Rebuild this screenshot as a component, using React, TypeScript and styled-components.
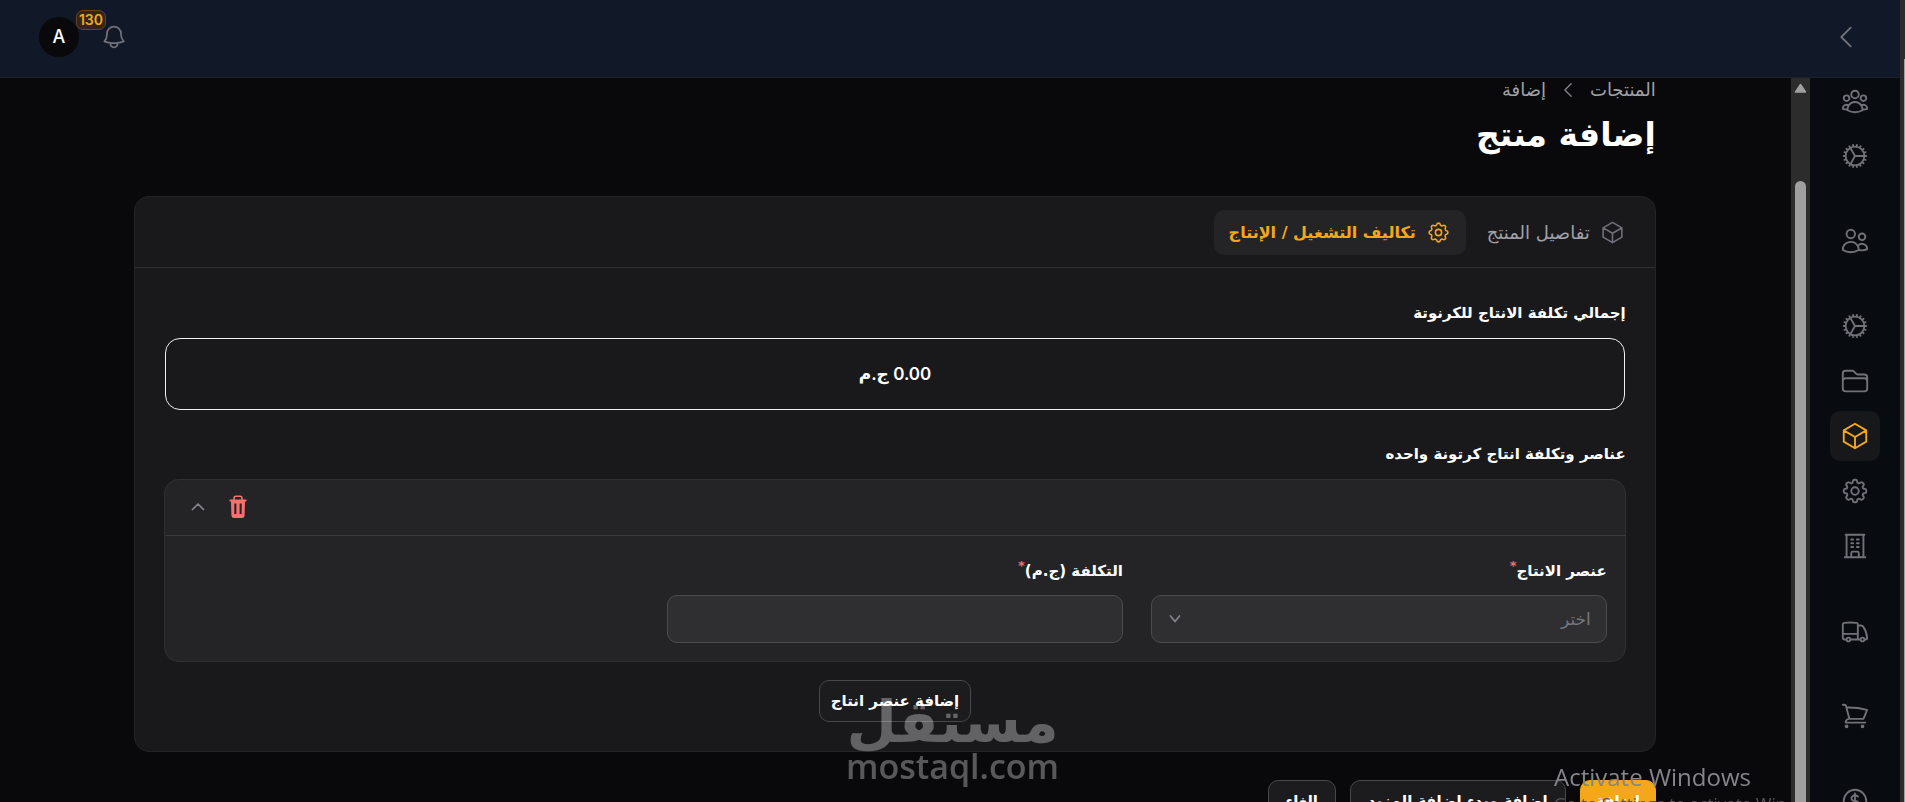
import React, { useState } from 'react';
import styled, { createGlobalStyle, css } from 'styled-components';
import { HiOutlineCog as HiScallopedCog } from 'react-icons/hi';
import {
  HiOutlineBell,
  HiOutlineBuildingOffice,
  HiOutlineChevronLeft,
  HiOutlineCog,
  HiOutlineCog8Tooth,
  HiOutlineCube,
  HiOutlineCurrencyDollar,
  HiOutlineFolder,
  HiOutlineShoppingCart,
  HiOutlineTruck,
  HiOutlineUserGroup,
  HiOutlineUsers,
} from 'react-icons/hi2';

const arabic = `'DejaVu Sans', sans-serif`;
const latin = `Inter, 'DejaVu Sans', sans-serif`;

const GlobalStyle = createGlobalStyle`
  *, *::before, *::after { box-sizing: border-box; }
  body { margin: 0; background: #09090b; color: #fff; font-family: ${arabic}; }
  button, input, select { font: inherit; color: inherit; margin: 0; }
  button { cursor: pointer; }
  a { color: inherit; text-decoration: none; }
`;

const Window = styled.div`
  display: flex;
  height: 100vh;
  overflow: hidden;
`;

const Shell = styled.div`
  flex: 1;
  min-width: 0;
  display: flex;
  flex-direction: column;
`;

const PageScrollbar = styled.div`
  flex: none;
  width: 5px;
  background: #2c2c2c;
  padding: 59px 0 0 4px;
`;

const PageThumb = styled.div`
  height: 100%;
  background: #9f9f9f;
`;

const Header = styled.header`
  flex: none;
  height: 78px;
  display: flex;
  align-items: center;
  justify-content: space-between;
  padding: 0 39px 3px;
  background: #111827;
  border-bottom: 1px solid #202024;
`;

const IconButton = styled.button`
  display: flex;
  padding: 0;
  border: 0;
  background: none;
  color: #71717a;
  svg { width: 30px; height: 30px; }
`;

const Account = styled.div`
  display: flex;
  align-items: center;
  gap: 21px;
`;

const BellButton = styled(IconButton)`
  position: relative;
  svg { width: 28px; height: 28px; }
`;

const Badge = styled.span`
  position: absolute;
  right: 22px;
  top: -13px;
  height: 20px;
  padding: 0 2px;
  border: 1px solid #6b431a;
  border-radius: 7px;
  background: #30251f;
  color: #f5a71b;
  font: 600 14px/18px ${latin};
`;

const Avatar = styled.button`
  width: 40px;
  height: 40px;
  padding: 0;
  border: 0;
  border-radius: 50%;
  background: #09090b;
  color: #fff;
  font: 500 18px/40px ${latin};
`;

const Body = styled.div`
  flex: 1;
  min-height: 0;
  display: flex;
`;

const Sidebar = styled.nav`
  flex: none;
  width: 90px;
  display: flex;
  flex-direction: column;
  align-items: center;
  gap: 35px;
  overflow: hidden;
  background: #080b10;
`;

const NavGroup = styled.div`
  flex: none;
  display: flex;
  flex-direction: column;
  gap: 5px;
  &:first-child { margin-top: -2px; }
`;

const NavItem = styled.a<{ $active?: boolean }>`
  display: flex;
  align-items: center;
  justify-content: center;
  width: 50px;
  height: 50px;
  border-radius: 10px;
  color: ${(p) => (p.$active ? '#f5a71b' : '#71717a')};
  background: ${(p) => (p.$active ? '#17181b' : 'transparent')};
  svg { width: 30px; height: 30px; }
`;

const Scrollbar = styled.div`
  flex: none;
  width: 19px;
  display: flex;
  flex-direction: column;
  align-items: center;
  gap: 88px;
  padding-top: 5px;
  background: #2c2c2c;
  svg { flex: none; display: block; }
`;

const Thumb = styled.div`
  flex: 1;
  width: 11px;
  border-radius: 6px 6px 0 0;
  background: #9f9f9f;
`;

const Main = styled.main`
  flex: 1;
  min-width: 0;
  padding-inline-start: 1px;
  overflow: hidden;
`;

const Content = styled.div`
  width: 85%;
  margin: 0 auto;
`;

const Breadcrumbs = styled.nav`
  display: flex;
  align-items: center;
  gap: 12px;
  height: 24px;
  color: #a1a1aa;
  font-size: 18px;
  line-height: 24px;
  svg { width: 20px; height: 20px; color: #85858d; }
`;

const Title = styled.h1`
  margin: 9px 0 37px;
  font-size: 33px;
  line-height: 48px;
  font-weight: 700;
`;

const Card = styled.section`
  border: 1px solid #242427;
  border-radius: 15px;
  background: #19191b;
`;

const Tabs = styled.div`
  display: flex;
  gap: 6px;
  padding: 13px 15px 12px;
  border-bottom: 1px solid #2f2f32;
`;

const Tab = styled.button<{ $active?: boolean }>`
  display: flex;
  align-items: center;
  gap: 10px;
  height: 45px;
  padding: 0 15px;
  border: 0;
  border-radius: 10px;
  background: ${(p) => (p.$active ? '#242427' : 'transparent')};
  color: ${(p) => (p.$active ? '#f5a71b' : '#a1a1aa')};
  font-size: ${(p) => (p.$active ? 16 : 18)}px;
  font-weight: ${(p) => (p.$active ? 700 : 400)};
  white-space: nowrap;
  svg { width: 25px; height: 25px; stroke-width: 1.5; color: ${(p) => (p.$active ? '#f5a71b' : '#71717a')}; }
`;

const Panel = styled.form`
  display: flex;
  flex-direction: column;
  padding: 30px 29px 29px;
`;

const Heading = styled.span`
  margin-bottom: 10px;
  font-size: 15px;
  line-height: 30px;
  font-weight: 700;
`;

const Total = styled.output`
  display: flex;
  align-items: center;
  justify-content: center;
  height: 72px;
  margin: 0 1px 29px;
  border: 1px solid #f0f0f1;
  border-radius: 15px;
  font: 600 17px/24px ${latin};
`;

const Item = styled.fieldset`
  min-width: 0;
  margin: 0 0 18px;
  padding: 0;
  border: 1px solid #303033;
  border-radius: 15px;
  background: #242427;
`;

const ItemHeader = styled.div`
  display: flex;
  align-items: center;
  justify-content: flex-end;
  gap: 14px;
  height: 56px;
  padding: 0 20px 2px;
  border-bottom: 1px solid #3c3c3f;
`;

const ItemAction = styled.button<{ $danger?: boolean }>`
  display: flex;
  align-items: center;
  justify-content: center;
  width: 26px;
  height: 26px;
  padding: 0;
  border: 0;
  background: none;
  color: ${(p) => (p.$danger ? '#f8716e' : '#85858d')};
`;

const Fields = styled.div`
  display: grid;
  grid-template-columns: repeat(3, 1fr);
  column-gap: 28px;
  padding: 20px 18px 18px;
`;

const Field = styled.div`
  display: flex;
  flex-direction: column;
  gap: 9px;
`;

const Label = styled.label`
  font-size: 15px;
  line-height: 30px;
  font-weight: 700;
`;

const Required = styled.sup`
  color: #f8716e;
  font-size: 13px;
  line-height: 0;
`;

const control = css`
  width: 100%;
  height: 48px;
  padding: 0 15px;
  border: 1px solid #4c4c4f;
  border-radius: 10px;
  background: #2f2f31;
  outline: 0;
  font-size: 17px;
`;

const Input = styled.input`
  ${control}
`;

const SelectWrap = styled.div`
  display: grid;
  align-items: center;
  > * { grid-area: 1 / 1; }
  > svg { justify-self: end; margin-left: 17px; color: #85858d; pointer-events: none; }
`;

const Select = styled.select`
  ${control}
  appearance: none;
  color: #77777f;
`;

const Button = styled.button<{ $primary?: boolean; $width: number }>`
  min-width: ${(p) => p.$width}px;
  height: 42px;
  padding: 0 10px;
  border: 1px solid ${(p) => (p.$primary ? '#f5a71b' : '#48484b')};
  border-radius: 10px;
  background: ${(p) => (p.$primary ? '#f5a71b' : '#1c1c1f')};
  font-size: 15px;
  font-weight: 700;
  white-space: nowrap;
`;

const AddRow = styled.div`
  display: flex;
  justify-content: center;
`;

const Actions = styled.div`
  display: flex;
  gap: 14px;
  margin-top: 28px;
`;

const Watermark = styled.div`
  position: fixed;
  left: 0;
  right: 0;
  bottom: 16px;
  display: flex;
  flex-direction: column;
  align-items: center;
  color: #fff;
  opacity: 0.32;
  pointer-events: none;
`;

const WatermarkName = styled.span`
  font: 700 58px/48px ${arabic};
`;

const WatermarkSite = styled.span`
  font: 600 34px/40px 'Open Sans', sans-serif;
`;

const Activation = styled.div`
  position: fixed;
  right: 120px;
  bottom: -13px;
  width: 231px;
  overflow: hidden;
  direction: ltr;
  color: #85858b;
  white-space: nowrap;
  pointer-events: none;
`;

const ActivationTitle = styled.div`
  font: 400 24px/30px 'Open Sans', sans-serif;
`;

const ActivationText = styled.div`
  font: 400 17px/23px 'Open Sans', sans-serif;
  color: #55555a;
`;

const TrashIcon = () => (
  <svg width="18" height="24" viewBox="0 0 18 24" fill="none" stroke="currentColor" strokeLinecap="round">
    <path d="M5 5V3.5Q5 1.3 7 1.3H11Q13 1.3 13 3.5V5" strokeWidth="1.6" />
    <path d="M1.4 5.6H16.6" strokeWidth="2" />
    <path
      fill="currentColor"
      stroke="none"
      fillRule="evenodd"
      d="M2 6H16L15.6 20.5Q15.4 23 13 23H5Q2.6 23 2.4 20.5ZM5.3 8.6V19H7.4V8.6ZM10.6 8.6V19H12.7V8.6Z"
    />
  </svg>
);

const Chevron = ({ up }: { up?: boolean }) => (
  <svg width="14" height="10" viewBox="0 0 14 10" fill="none" stroke="currentColor" strokeWidth="1.7" strokeLinecap="round" strokeLinejoin="round">
    <path d={up ? 'M1.5 7.5L7 2L12.5 7.5' : 'M2.5 2L7 7.5L11.5 2'} />
  </svg>
);

const navGroups = [
  [
    { label: 'العملاء', icon: HiOutlineUserGroup },
    { label: 'الإعدادات', icon: HiOutlineCog },
  ],
  [{ label: 'المستخدمون', icon: HiOutlineUsers }],
  [
    { label: 'الإنتاج', icon: HiOutlineCog },
    { label: 'الأقسام', icon: HiOutlineFolder },
    { label: 'المنتجات', icon: HiOutlineCube, active: true },
    { label: 'التشغيل', icon: HiOutlineCog8Tooth },
    { label: 'المخازن', icon: HiOutlineBuildingOffice },
  ],
  [{ label: 'الموردون', icon: HiOutlineTruck }],
  [{ label: 'المشتريات', icon: HiOutlineShoppingCart }],
  [{ label: 'الحسابات', icon: HiOutlineCurrencyDollar }],
];

export default function App() {
  const [cost, setCost] = useState('');
  return (
    <>
      <GlobalStyle />
      <Window>
        <Shell dir="rtl">
          <Header>
            <IconButton aria-label="فتح القائمة">
              <HiOutlineChevronLeft />
            </IconButton>
            <Account>
              <BellButton aria-label="الإشعارات">
                <HiOutlineBell />
                <Badge>130</Badge>
              </BellButton>
              <Avatar>A</Avatar>
            </Account>
          </Header>
          <Body>
            <Sidebar>
              {navGroups.map((group, i) => (
                <NavGroup key={i}>
                  {group.map(({ label, icon: Icon, active }: any) => (
                    <NavItem key={label} href="#" aria-label={label} $active={active}>
                      <Icon />
                    </NavItem>
                  ))}
                </NavGroup>
              ))}
            </Sidebar>
            <Scrollbar aria-hidden="true">
              <svg width="13" height="10" viewBox="0 0 13 10">
                <path d="M6.5 1.5L11.5 9H1.5Z" fill="#9f9f9f" stroke="#9f9f9f" strokeWidth="1.5" strokeLinejoin="round" />
              </svg>
              <Thumb />
            </Scrollbar>
            <Main>
              <Content>
                <Breadcrumbs>
                  <a href="#">المنتجات</a>
                  <HiOutlineChevronLeft />
                  <span>إضافة</span>
                </Breadcrumbs>
                <Title>إضافة منتج</Title>
                <Card>
                  <Tabs role="tablist">
                    <Tab role="tab" aria-selected={false}>
                      <HiOutlineCube />
                      تفاصيل المنتج
                    </Tab>
                    <Tab role="tab" aria-selected $active>
                      <HiScallopedCog />
                      تكاليف التشغيل / الإنتاج
                    </Tab>
                  </Tabs>
                  <Panel>
                    <Heading>إجمالي تكلفة الانتاج للكرنوتة</Heading>
                    <Total>0.00 ج.م</Total>
                    <Heading id="items">عناصر وتكلفة انتاج كرتونة واحده</Heading>
                    <Item aria-labelledby="items">
                      <ItemHeader>
                        <ItemAction type="button" $danger aria-label="حذف">
                          <TrashIcon />
                        </ItemAction>
                        <ItemAction type="button" aria-label="طي">
                          <Chevron up />
                        </ItemAction>
                      </ItemHeader>
                      <Fields>
                        <Field>
                          <Label htmlFor="element">
                            عنصر الانتاج<Required>*</Required>
                          </Label>
                          <SelectWrap>
                            <Select id="element" defaultValue="">
                              <option value="">اختر</option>
                            </Select>
                            <Chevron />
                          </SelectWrap>
                        </Field>
                        <Field>
                          <Label htmlFor="cost">
                            التكلفة (ج.م)<Required>*</Required>
                          </Label>
                          <Input id="cost" value={cost} onChange={(e) => setCost(e.target.value)} />
                        </Field>
                      </Fields>
                    </Item>
                    <AddRow>
                      <Button type="button" $width={152}>إضافة عنصر انتاج</Button>
                    </AddRow>
                  </Panel>
                </Card>
                <Actions>
                  <Button $primary $width={76}>إضافة</Button>
                  <Button $width={216}>إضافة وبدء إضافة المزيد</Button>
                  <Button $width={68}>إلغاء</Button>
                </Actions>
              </Content>
            </Main>
          </Body>
        </Shell>
        <PageScrollbar aria-hidden="true">
          <PageThumb />
        </PageScrollbar>
      </Window>
      <Watermark>
        <WatermarkName>مستقل</WatermarkName>
        <WatermarkSite>mostaql.com</WatermarkSite>
      </Watermark>
      <Activation>
        <ActivationTitle>Activate Windows</ActivationTitle>
        <ActivationText>Go to Settings to activate Windows.</ActivationText>
      </Activation>
    </>
  );
}
